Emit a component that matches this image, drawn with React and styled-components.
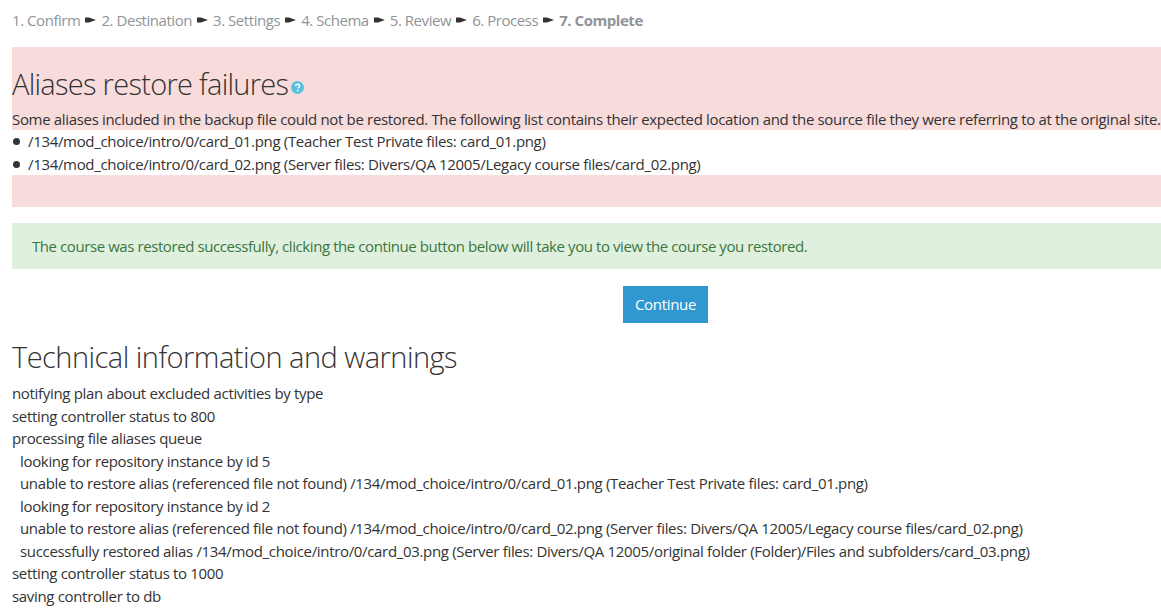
import React from 'react'
import { styled, createGlobalStyle } from 'styled-components'

const Global = createGlobalStyle`
html, body { margin: 0; padding: 0; background: #fff; }
body { font-family: "Open Sans", "Liberation Sans", sans-serif; font-size: 15px; letter-spacing: -0.33px; line-height: 22.5px; color: #333; }
`;

const Page = styled.div`
width: 1149px;
height: 612px;
padding: 0 0 0 12px;
overflow: hidden;
`;

const Steps = styled.div`
height: 47px;
padding-top: 9px;
box-sizing: border-box;
color: #8e9499;
white-space: nowrap;
display: flex;
align-items: flex-start;
gap: 5px;
letter-spacing: -0.45px;
`;

const Current = styled.b`
font-weight: 700;
`;

const Arrow = styled.svg`
width: 11px;
height: 6px;
flex: none;
margin-top: 8px;
`;

const Pink = styled.div`
background: #f8dcdc;
height: ${(p) => p.$h}px;
box-sizing: border-box;
`;

const Heading = styled.h2`
margin: 0;
padding-top: 18px;
font-size: 29px;
letter-spacing: -0.72px;
line-height: 38px;
font-weight: 300;
color: #333;
display: flex;
align-items: flex-end;
`;

const HelpIcon = styled.svg`
width: 13px;
height: 13px;
margin: 0 0 9px 3px;
`;

const Intro = styled.p`
margin: 0;
padding-top: 5px;
white-space: nowrap;
`;

const Aliases = styled.ul`
margin: 0;
padding: 0 0 0 16px;
height: 45px;
box-sizing: border-box;
list-style: none;
`;

const Alias = styled.li`
position: relative;
height: 22.5px;
&::before {
  content: "";
  position: absolute;
  left: -15px;
  top: 8px;
  width: 7px;
  height: 7px;
  border-radius: 50%;
  background: #333;
}
`;

const Success = styled.div`
margin-top: 16px;
height: 46px;
padding: 12px 20px 0;
box-sizing: border-box;
background: #dff0df;
color: #3c763d;
letter-spacing: -0.42px;
`;

const ButtonRow = styled.div`
display: flex;
justify-content: flex-start;
margin: 17px 0 0 611px;
`;

const Button = styled.button`
width: 85px;
height: 37px;
border: 0;
padding: 0;
background: #3097d1;
color: #fff;
font: inherit;
letter-spacing: inherit;
`;

const Title = styled.h2`
margin: 15px 0 0;
font-size: 29px;
letter-spacing: -0.52px;
line-height: 38px;
font-weight: 300;
color: #333;
`;

const Log = styled.div`
margin-top: 6px;
`;

const LogLine = styled.div`
height: 22.5px;
white-space: nowrap;
padding-left: ${(p) => (p.$sub ? 8 : 0)}px;
`;

const steps = ['1. Confirm', '2. Destination', '3. Settings', '4. Schema', '5. Review', '6. Process']

const log = [
  ['notifying plan about excluded activities by type'],
  ['setting controller status to 800'],
  ['processing file aliases queue'],
  ['looking for repository instance by id 5', true],
  ['unable to restore alias (referenced file not found) /134/mod_choice/intro/0/card_01.png (Teacher Test Private files: card_01.png)', true],
  ['looking for repository instance by id 2', true],
  ['unable to restore alias (referenced file not found) /134/mod_choice/intro/0/card_02.png (Server files: Divers/QA 12005/Legacy course files/card_02.png)', true],
  ['successfully restored alias /134/mod_choice/intro/0/card_03.png (Server files: Divers/QA 12005/original folder (Folder)/Files and subfolders/card_03.png)', true],
  ['setting controller status to 1000'],
  ['saving controller to db'],
]

export default function App() {
  return (
    <Page>
      <Global />
      <Steps>
        {steps.map((s) => (
          <React.Fragment key={s}>
            <span>{s}</span>
            <Arrow viewBox="0 0 11 6">
              <path d="M0 .5h4L11 3 4 5.500H0z" fill="#333" />
            </Arrow>
          </React.Fragment>
        ))}
        <Current>7. Complete</Current>
      </Steps>
      <Pink $h={83}>
        <Heading>
          Aliases restore failures
          <HelpIcon viewBox="0 0 16 16">
            <circle cx="8" cy="8" r="8" fill="#5bc0de" />
            <path d="M5.600 6.200C5.700 4.800 6.700 4 8.100 4c1.400 0 2.400.8 2.400 2 0 1-.6 1.500-1.300 2-.5.3-.7.6-.7 1.200" fill="none" stroke="#fff" strokeWidth="1.7" />
            <circle cx="8.400" cy="11.800" r="1.100" fill="#fff" />
          </HelpIcon>
        </Heading>
        <Intro>Some aliases included in the backup file could not be restored. The following list contains their expected location and the source file they were referring to at the original site.</Intro>
      </Pink>
      <Aliases>
        <Alias>/134/mod_choice/intro/0/card_01.png (Teacher Test Private files: card_01.png)</Alias>
        <Alias>/134/mod_choice/intro/0/card_02.png (Server files: Divers/QA 12005/Legacy course files/card_02.png)</Alias>
      </Aliases>
      <Pink $h={32} />
      <Success>The course was restored successfully, clicking the continue button below will take you to view the course you restored.</Success>
      <ButtonRow>
        <Button>Continue</Button>
      </ButtonRow>
      <Title>Technical information and warnings</Title>
      <Log>
        {log.map(([text, sub]) => (
          <LogLine key={text} $sub={sub}>{text}</LogLine>
        ))}
      </Log>
    </Page>
  )
}
